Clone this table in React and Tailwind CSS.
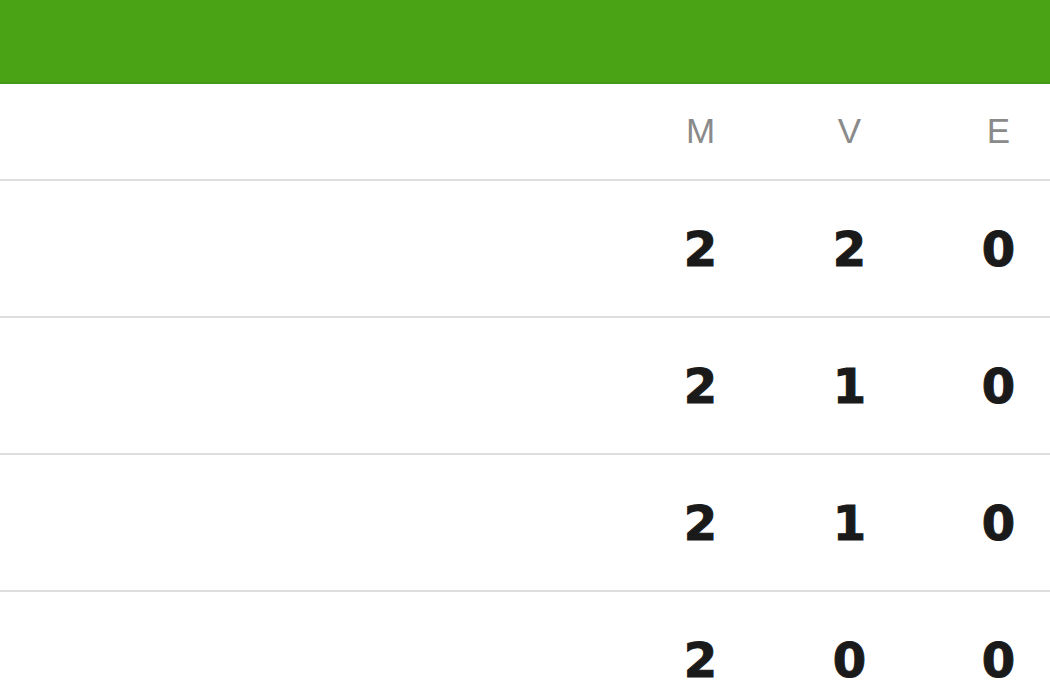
import React from "react";

const rows = [
  [2, 2, 0],
  [2, 1, 0],
  [2, 1, 0],
  [2, 0, 0],
];

function App() {
  return (
    <div className="w-[1050px] h-[700px] overflow-hidden bg-white">
      <div className="h-[84px] bg-[#4aa315] border-b-2 border-[#43981a]" />
      <div className="w-[1073px]">
        <div className="flex items-center h-[97px] border-b-2 border-[#dedede] font-['Liberation_Sans',Arial,sans-serif] text-[35px] text-[#8a8a8a]">
          <div className="flex-1" />
          <div className="w-[149px] text-center">M</div>
          <div className="w-[149px] text-center">V</div>
          <div className="w-[149px] text-center">E</div>
        </div>
        {rows.map((r, i) => (
          <div
            key={i}
            className="flex items-center h-[137px] border-b-2 border-[#dedede] font-['DejaVu_Sans',Verdana,sans-serif] font-bold text-[48px] text-[#1a1a1a] [-webkit-text-stroke:1px_#1a1a1a]"
          >
            <div className="flex-1" />
            {r.map((v, j) => (
              <div key={j} className="w-[149px] text-center">
                {v}
              </div>
            ))}
          </div>
        ))}
      </div>
    </div>
  );
}

export default App;
